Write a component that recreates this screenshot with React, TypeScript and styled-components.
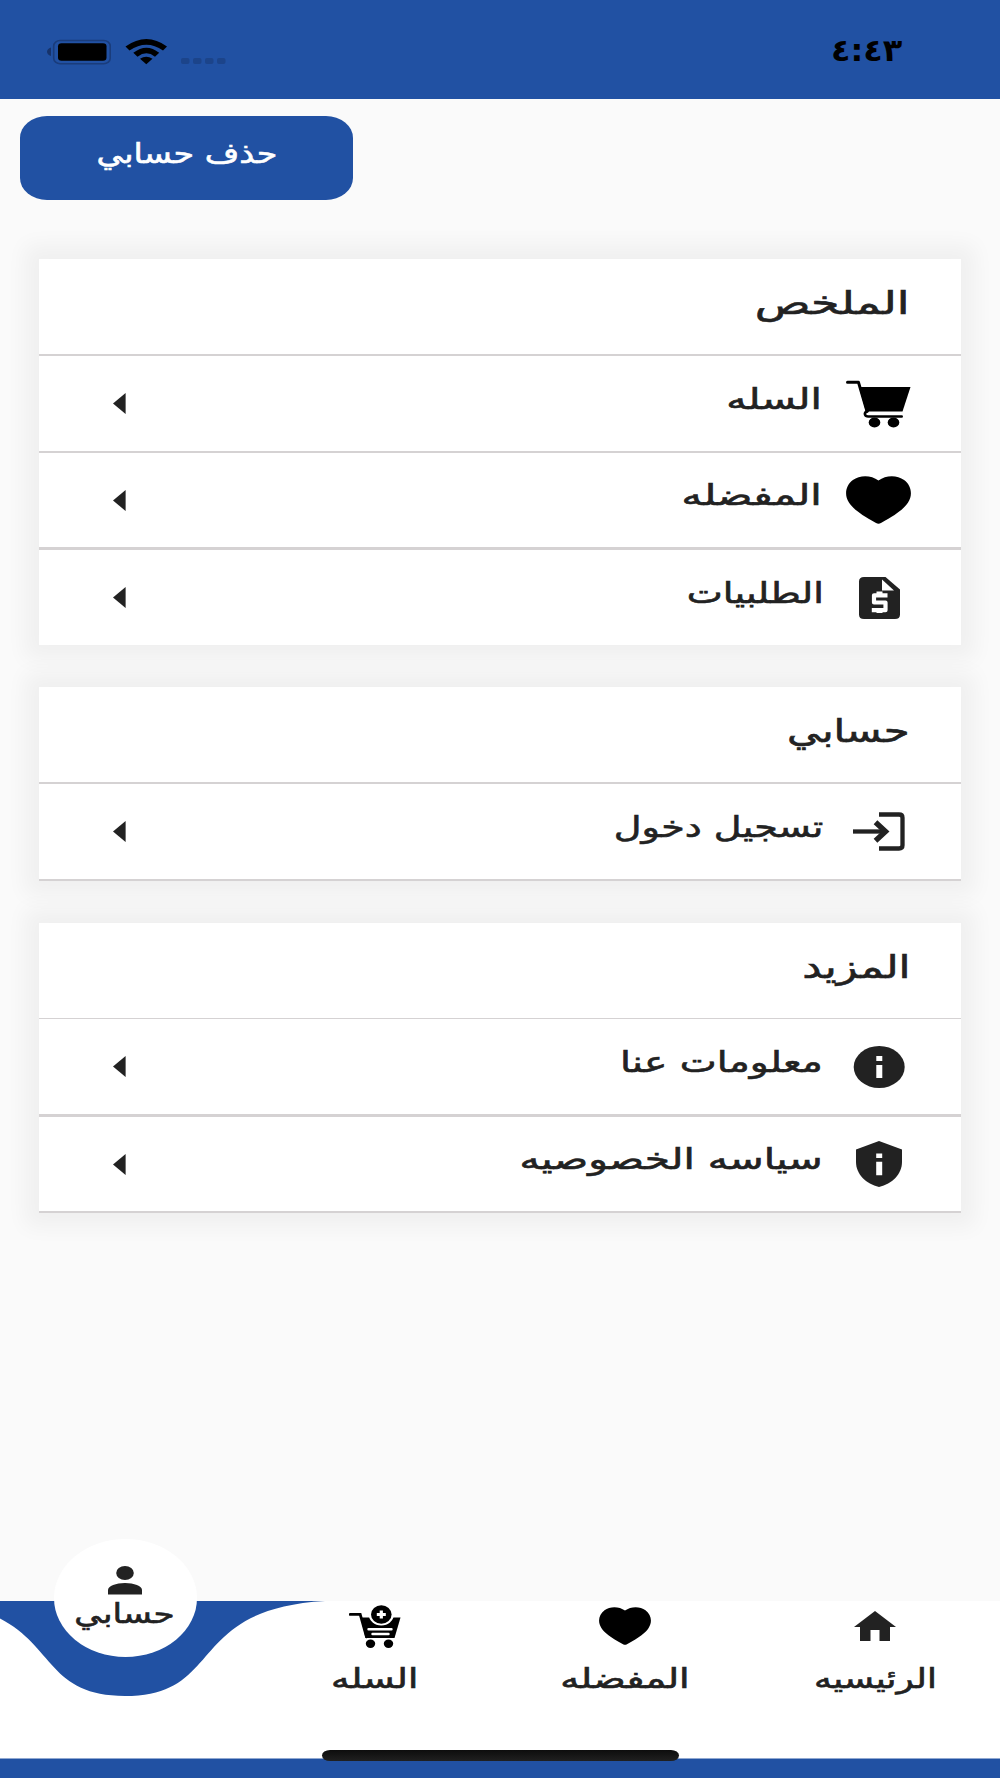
import React from "react";
import styled, { createGlobalStyle } from "styled-components";

const BLUE = "#2151a3";
const INK = "#222222";

const Global = createGlobalStyle`
  html, body { margin: 0; padding: 0; background: #fafafa; }
  * { box-sizing: border-box; }
  svg { display: block; flex: none; }
`;

const Screen = styled.div`
  width: 1000px;
  height: 1778px;
  display: flex;
  flex-direction: column;
  overflow: hidden;
  background: #fafafa;
  font-family: "DejaVu Sans", "Noto Sans", sans-serif;
  color: ${INK};
`;

const StatusBar = styled.header`
  height: 99px;
  flex: none;
  display: flex;
  justify-content: space-between;
  padding: 36px 98px 0 46px;
  background: ${BLUE};
`;

const Text = styled.span<{ $size: number; $stretch?: number; $origin?: string; $weight?: number }>`
  display: block;
  white-space: nowrap;
  font-size: ${(p) => p.$size}px;
  line-height: 44px;
  font-weight: ${(p) => p.$weight ?? 400};
  -webkit-text-stroke: ${(p) => (p.$weight ? 0 : 0.6)}px currentColor;
  transform: scaleX(${(p) => p.$stretch ?? 1});
  transform-origin: ${(p) => p.$origin ?? "right"} center;
`;

const Clock = styled.time`
  color: #000;
  direction: ltr;
  margin-top: -8px;
`;

const Content = styled.main`
  flex: 1;
  display: flex;
  flex-direction: column;
  padding: 17px 39px 0;
`;

const DeleteButton = styled.button`
  width: 333px;
  height: 84px;
  margin: 0 0 59px -19px;
  padding: 0 0 9px;
  border: 0;
  border-radius: 27px / 22px;
  background: ${BLUE};
  color: #fff;
  font-family: inherit;
  display: flex;
  align-items: center;
  justify-content: center;
`;

const Card = styled.section`
  direction: rtl;
  margin-bottom: 42px;
  background: #fff;
  box-shadow: 0 0 20px 14px rgba(0, 0, 0, 0.043);
`;

const Row = styled.div<{ $height: number; $line: number }>`
  height: ${(p) => p.$height}px;
  border-bottom: ${(p) => p.$line}px solid #d5d2d3;
  display: flex;
  align-items: center;
  padding: 0 50px 0 74px;
`;

const CardTitle = styled.h2`
  margin: 0 1px 8px 0;
  font-weight: 400;
`;

const IconSlot = styled.div`
  width: 65px;
  display: flex;
  justify-content: center;
`;

const RowLabel = styled.div<{ $gap: number }>`
  flex: 1;
  display: flex;
  margin: 0 ${(p) => p.$gap}px 10px 0;
`;

const Nav = styled.nav`
  direction: rtl;
  position: relative;
  height: 177px;
  flex: none;
  display: grid;
  grid-template-columns: repeat(4, 250px);
  background: linear-gradient(#fff 0 157px, ${BLUE} 158px);
`;

const NavItem = styled.a`
  position: relative;
  display: flex;
  flex-direction: column;
  align-items: center;
  color: ${INK};
`;

const NavIcon = styled.div`
  height: 50px;
  display: flex;
  align-items: center;
`;

const NavLabel = styled.div`
  margin-top: 6px;
`;

const Wave = styled.svg`
  position: absolute;
  left: 0;
  top: 0;
`;

const Bubble = styled.div`
  position: relative;
  width: 143px;
  height: 118px;
  margin-top: -62px;
  padding-top: 27px;
  border-radius: 50%;
  background: #fff;
  display: flex;
  flex-direction: column;
  align-items: center;
`;

const BubbleLabel = styled.div`
  margin-top: -3px;
`;

const HomeIndicator = styled.div`
  position: absolute;
  left: 322px;
  top: 149px;
  width: 357px;
  height: 11px;
  border-radius: 8px / 5.5px;
  background: linear-gradient(#0d0d0d, #202020);
`;

const StatusIcons = () => (
  <svg width="184" height="32" viewBox="46 36 184 32">
    <path d="M51 47.5v8.5q-4-1.500-4-4.250t4-4.250z" fill="#17336b" />
    <rect x="53.700" y="40.500" width="56.500" height="23.300" rx="6.500" ry="5.500" fill="none" stroke="#1a3c7b" strokeWidth="1.600" />
    <rect x="58" y="43.300" width="48.500" height="17.400" rx="3.500" ry="3" fill="#000" />
    <path d="M125.500 46.500Q146.500 31.500 167 46.500L163 50.500Q146.500 39 129.500 50.500z" />
    <path d="M133.300 52.800Q146.500 42.500 159.200 52.800L155 56.700Q146.500 50 137.500 56.700z" />
    <path d="M140 58.800Q146.300 54.500 152.500 58.800L146.300 64.300z" />
    <g fill="#1c448a">
      <rect x="181" y="58" width="8.500" height="6" rx="2" />
      <rect x="193" y="58" width="8.500" height="6" rx="2" />
      <rect x="205" y="58" width="8.500" height="6" rx="2" />
      <rect x="217" y="58" width="8.500" height="6" rx="2" />
    </g>
  </svg>
);

const CartIcon = () => (
  <svg width="65" height="48" viewBox="0 0 65 48">
    <path d="M1.500 2.300h11l8.500 29" fill="none" stroke="#000" strokeWidth="3" strokeLinecap="round" strokeLinejoin="round" />
    <path d="M13 7h51.500L56.500 31.500H20z" />
    <path d="M21.500 31q-3.200 1.500-2.500 3.600.6 1.900 3.200 1.900h33.500" fill="none" stroke="#000" strokeWidth="2.600" strokeLinecap="round" />
    <ellipse cx="28.500" cy="42.500" rx="5.800" ry="5" />
    <ellipse cx="47.500" cy="42.500" rx="5.800" ry="5" />
  </svg>
);

const HeartIcon = ({ width, height }: { width: number; height: number }) => (
  <svg width={width} height={height} viewBox="0 0 66 48" preserveAspectRatio="none" fill="#000">
    <path d="M33 4.500C25.500-1.200 14-1.200 7 4-0.500 9.500-2 19 3 26.500 6.500 32 14.500 38.500 30.500 47q2.500 1.600 5 0C51.500 38.500 59.500 32 63 26.500 68 19 66.500 9.500 59 4 52-1.200 40.500-1.200 33 4.500z" />
  </svg>
);

const InvoiceIcon = () => (
  <svg width="42" height="42" viewBox="-1 0 42 42" fill={INK}>
    <path d="M5 0h21.500L41 12.500V37.500q0 4.500-5 4.500H5q-5 0-5-4.500V4.500Q0 0 5 0z" />
    <path d="M23 2.500v11h12z" fill="#fff" />
    <path d="M28.500 18.300H15v7.200h11.500v7.700H12.800" fill="none" stroke="#fff" strokeWidth="4.200" strokeLinejoin="round" />
    <path d="M20.500 14.500v4M20.500 33v3" fill="none" stroke="#fff" strokeWidth="6" />
  </svg>
);

const LoginIcon = () => (
  <svg width="52" height="39" viewBox="0 0 52 39" fill="none" stroke={INK} strokeWidth="4.300">
    <path d="M26 2.500H46q3.500 0 3.500 3.200v27.600q0 3.200-3.500 3.200H26" />
    <path d="M0 19.500h30" />
    <path d="M22.500 10.300l10 9.200-10 9.200" strokeWidth="5.400" />
  </svg>
);

const InfoIcon = () => (
  <svg width="52" height="43" viewBox="0 0 52 43">
    <ellipse cx="26.200" cy="22" rx="25.500" ry="21" fill={INK} />
    <path d="M23.300 11h6v5h-6zM23.300 20h6v13h-6z" fill="#fff" />
  </svg>
);

const ShieldIcon = () => (
  <svg width="46" height="46" viewBox="0 0 46 46">
    <path d="M23 0L46 8.500V21c0 12-10 22-23 25C10 43 0 33 0 21V8.500z" fill={INK} />
    <path d="M20.200 12.500h6v4.500h-6zM20.200 20.700h6v13.500h-6z" fill="#fff" />
  </svg>
);

const Arrow = () => (
  <svg width="13" height="21" viewBox="0 0 13 21">
    <path d="M12.600 0v21L0 10.500z" fill={INK} />
  </svg>
);

const HomeIcon = () => (
  <svg width="42" height="30" viewBox="0 0 42 30" fill={INK}>
    <path d="M21 0l21 16h-6v14H25.500V19h-9v11H6V16H0z" />
  </svg>
);

const AddCartIcon = () => (
  <svg width="52" height="43" viewBox="0 0 52 43">
    <path d="M1.200 9.300h10l6.300 22.500" fill="none" stroke="#000" strokeWidth="2.800" strokeLinecap="round" />
    <path d="M12 12.500h39.500L45.500 33H16.500z" />
    <ellipse cx="32.300" cy="9.500" rx="12.500" ry="11" fill="#fff" />
    <ellipse cx="32.300" cy="9.500" rx="10.300" ry="9.300" />
    <path d="M32.300 5.500v8M27.800 9.500h9" stroke="#fff" strokeWidth="3.200" />
    <path d="M19.500 24.200h23M23.500 29h16" stroke="#fff" strokeWidth="2.400" strokeLinecap="round" />
    <ellipse cx="21.500" cy="38.800" rx="4.700" ry="4.200" />
    <ellipse cx="39.500" cy="38.800" rx="4.700" ry="4.200" />
  </svg>
);

const PersonIcon = () => (
  <svg width="34" height="29" viewBox="0 0 34 29" fill={INK}>
    <ellipse cx="17" cy="7" rx="8.800" ry="6.900" />
    <path d="M0 28.500V24c0-4 8-7 17-7s17 3 17 7v4.500z" />
  </svg>
);

type Item = {
  label: string;
  icon: React.ReactNode;
  height: number;
  line: number;
  stretch: number;
  gap: number;
};
type Group = { title: string; stretch: number; height: number; line: number; items: Item[] };

const groups: Group[] = [
  {
    title: "الملخص", stretch: 1.44, height: 97, line: 2,
    items: [
      { label: "السله", icon: <CartIcon />, height: 97, line: 2, stretch: 1.41, gap: 24 },
      { label: "المفضله", icon: <HeartIcon width={65} height={48} />, height: 97, line: 3, stretch: 1.42, gap: 24 },
      { label: "الطلبيات", icon: <InvoiceIcon />, height: 95, line: 0, stretch: 1.32, gap: 22 },
    ],
  },
  {
    title: "حسابي", stretch: 1.31, height: 97, line: 2,
    items: [{ label: "تسجيل دخول", icon: <LoginIcon />, height: 97, line: 2, stretch: 1.315, gap: 23 }],
  },
  {
    title: "المزيد", stretch: 1.345, height: 96, line: 1,
    items: [
      { label: "معلومات عنا", icon: <InfoIcon />, height: 98, line: 3, stretch: 1.353, gap: 23 },
      { label: "سياسه الخصوصيه", icon: <ShieldIcon />, height: 96, line: 2, stretch: 1.406, gap: 23 },
    ],
  },
];

const tabs = [
  { label: "الرئيسيه", icon: <HomeIcon />, stretch: 1.32 },
  { label: "المفضله", icon: <HeartIcon width={52} height={38} />, stretch: 1.41 },
  { label: "السله", icon: <AddCartIcon />, stretch: 1.38 },
];

export default function App() {
  return (
    <Screen>
      <Global />
      <StatusBar>
        <StatusIcons />
        <Clock>
          <Text $size={31} $weight={700} $stretch={1.03}>٤:٤٣</Text>
        </Clock>
      </StatusBar>
      <Content>
        <DeleteButton>
          <Text $size={28} $stretch={1.19} $origin="center">حذف حسابي</Text>
        </DeleteButton>
        {groups.map((group) => (
          <Card key={group.title}>
            <Row $height={group.height} $line={group.line}>
              <CardTitle>
                <Text $size={32} $stretch={group.stretch}>{group.title}</Text>
              </CardTitle>
            </Row>
            {group.items.map((item) => (
              <Row key={item.label} $height={item.height} $line={item.line}>
                <IconSlot>{item.icon}</IconSlot>
                <RowLabel $gap={item.gap}>
                  <Text $size={29} $stretch={item.stretch}>{item.label}</Text>
                </RowLabel>
                <Arrow />
              </Row>
            ))}
          </Card>
        ))}
      </Content>
      <Nav>
        <Wave width="330" height="97" viewBox="0 0 330 97">
          <path d="M-75 0C65 8 25 95 125 95S185 8 325 0z" fill={BLUE} />
        </Wave>
        {tabs.map((tab) => (
          <NavItem key={tab.label}>
            <NavIcon>{tab.icon}</NavIcon>
            <NavLabel>
              <Text $size={27} $stretch={tab.stretch} $origin="center">{tab.label}</Text>
            </NavLabel>
          </NavItem>
        ))}
        <NavItem>
          <Bubble>
            <PersonIcon />
            <BubbleLabel>
              <Text $size={27} $stretch={1.27} $origin="center">حسابي</Text>
            </BubbleLabel>
          </Bubble>
        </NavItem>
        <HomeIndicator />
      </Nav>
    </Screen>
  );
}
